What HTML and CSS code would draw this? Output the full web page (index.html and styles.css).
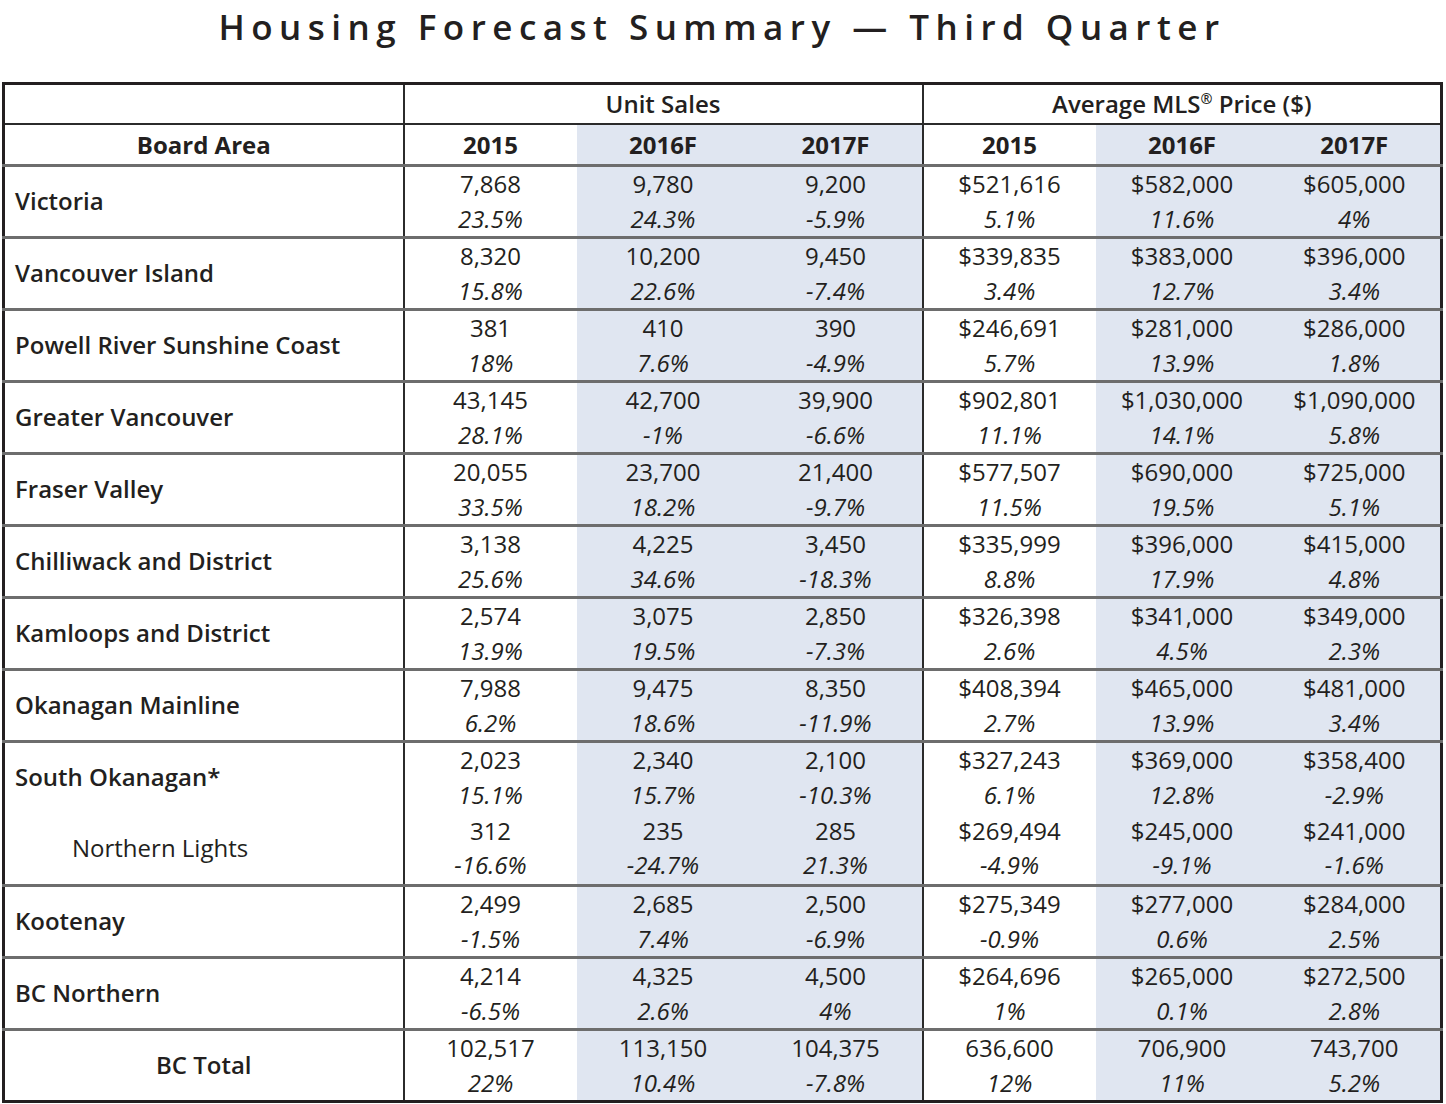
FILE: index.html
```html
<!DOCTYPE html>
<html lang="en">
<head>
<meta charset="utf-8">
<title>Housing Forecast Summary — Third Quarter</title>
<link rel="stylesheet" href="styles.css">
</head>
<body>
<div class="page">
  <h1 class="title">Housing Forecast Summary — Third Quarter</h1>
  <table class="forecast">
    <colgroup>
      <col class="c-area">
      <col class="c-val"><col class="c-val"><col class="c-val">
      <col class="c-val"><col class="c-val"><col class="c-val">
    </colgroup>
    <thead>
      <tr class="group-row">
        <th class="area"></th>
        <th colspan="3" class="sep">Unit Sales</th>
        <th colspan="3" class="sep">Average MLS<sup>®</sup> Price ($)</th>
      </tr>
      <tr class="year-row">
        <th class="area">Board Area</th>
        <th class="sep">2015</th>
        <th class="shade">2016F</th>
        <th class="shade">2017F</th>
        <th class="sep">2015</th>
        <th class="shade">2016F</th>
        <th class="shade">2017F</th>
      </tr>
    </thead>
    <tbody>
      <tr>
        <td class="label">Victoria</td>
        <td class="sep"><span class="num">7,868</span><span class="pct">23.5%</span></td>
        <td class="shade"><span class="num">9,780</span><span class="pct">24.3%</span></td>
        <td class="shade"><span class="num">9,200</span><span class="pct">-5.9%</span></td>
        <td class="sep"><span class="num">$521,616</span><span class="pct">5.1%</span></td>
        <td class="shade"><span class="num">$582,000</span><span class="pct">11.6%</span></td>
        <td class="shade"><span class="num">$605,000</span><span class="pct">4%</span></td>
      </tr>
      <tr>
        <td class="label">Vancouver Island</td>
        <td class="sep"><span class="num">8,320</span><span class="pct">15.8%</span></td>
        <td class="shade"><span class="num">10,200</span><span class="pct">22.6%</span></td>
        <td class="shade"><span class="num">9,450</span><span class="pct">-7.4%</span></td>
        <td class="sep"><span class="num">$339,835</span><span class="pct">3.4%</span></td>
        <td class="shade"><span class="num">$383,000</span><span class="pct">12.7%</span></td>
        <td class="shade"><span class="num">$396,000</span><span class="pct">3.4%</span></td>
      </tr>
      <tr>
        <td class="label">Powell River Sunshine Coast</td>
        <td class="sep"><span class="num">381</span><span class="pct">18%</span></td>
        <td class="shade"><span class="num">410</span><span class="pct">7.6%</span></td>
        <td class="shade"><span class="num">390</span><span class="pct">-4.9%</span></td>
        <td class="sep"><span class="num">$246,691</span><span class="pct">5.7%</span></td>
        <td class="shade"><span class="num">$281,000</span><span class="pct">13.9%</span></td>
        <td class="shade"><span class="num">$286,000</span><span class="pct">1.8%</span></td>
      </tr>
      <tr>
        <td class="label">Greater Vancouver</td>
        <td class="sep"><span class="num">43,145</span><span class="pct">28.1%</span></td>
        <td class="shade"><span class="num">42,700</span><span class="pct">-1%</span></td>
        <td class="shade"><span class="num">39,900</span><span class="pct">-6.6%</span></td>
        <td class="sep"><span class="num">$902,801</span><span class="pct">11.1%</span></td>
        <td class="shade"><span class="num">$1,030,000</span><span class="pct">14.1%</span></td>
        <td class="shade"><span class="num">$1,090,000</span><span class="pct">5.8%</span></td>
      </tr>
      <tr>
        <td class="label">Fraser Valley</td>
        <td class="sep"><span class="num">20,055</span><span class="pct">33.5%</span></td>
        <td class="shade"><span class="num">23,700</span><span class="pct">18.2%</span></td>
        <td class="shade"><span class="num">21,400</span><span class="pct">-9.7%</span></td>
        <td class="sep"><span class="num">$577,507</span><span class="pct">11.5%</span></td>
        <td class="shade"><span class="num">$690,000</span><span class="pct">19.5%</span></td>
        <td class="shade"><span class="num">$725,000</span><span class="pct">5.1%</span></td>
      </tr>
      <tr>
        <td class="label">Chilliwack and District</td>
        <td class="sep"><span class="num">3,138</span><span class="pct">25.6%</span></td>
        <td class="shade"><span class="num">4,225</span><span class="pct">34.6%</span></td>
        <td class="shade"><span class="num">3,450</span><span class="pct">-18.3%</span></td>
        <td class="sep"><span class="num">$335,999</span><span class="pct">8.8%</span></td>
        <td class="shade"><span class="num">$396,000</span><span class="pct">17.9%</span></td>
        <td class="shade"><span class="num">$415,000</span><span class="pct">4.8%</span></td>
      </tr>
      <tr>
        <td class="label">Kamloops and District</td>
        <td class="sep"><span class="num">2,574</span><span class="pct">13.9%</span></td>
        <td class="shade"><span class="num">3,075</span><span class="pct">19.5%</span></td>
        <td class="shade"><span class="num">2,850</span><span class="pct">-7.3%</span></td>
        <td class="sep"><span class="num">$326,398</span><span class="pct">2.6%</span></td>
        <td class="shade"><span class="num">$341,000</span><span class="pct">4.5%</span></td>
        <td class="shade"><span class="num">$349,000</span><span class="pct">2.3%</span></td>
      </tr>
      <tr>
        <td class="label">Okanagan Mainline</td>
        <td class="sep"><span class="num">7,988</span><span class="pct">6.2%</span></td>
        <td class="shade"><span class="num">9,475</span><span class="pct">18.6%</span></td>
        <td class="shade"><span class="num">8,350</span><span class="pct">-11.9%</span></td>
        <td class="sep"><span class="num">$408,394</span><span class="pct">2.7%</span></td>
        <td class="shade"><span class="num">$465,000</span><span class="pct">13.9%</span></td>
        <td class="shade"><span class="num">$481,000</span><span class="pct">3.4%</span></td>
      </tr>
      <tr>
        <td class="label">South Okanagan*</td>
        <td class="sep"><span class="num">2,023</span><span class="pct">15.1%</span></td>
        <td class="shade"><span class="num">2,340</span><span class="pct">15.7%</span></td>
        <td class="shade"><span class="num">2,100</span><span class="pct">-10.3%</span></td>
        <td class="sep"><span class="num">$327,243</span><span class="pct">6.1%</span></td>
        <td class="shade"><span class="num">$369,000</span><span class="pct">12.8%</span></td>
        <td class="shade"><span class="num">$358,400</span><span class="pct">-2.9%</span></td>
      </tr>
      <tr class="sub">
        <td class="label sublabel">Northern Lights</td>
        <td class="sep"><span class="num">312</span><span class="pct">-16.6%</span></td>
        <td class="shade"><span class="num">235</span><span class="pct">-24.7%</span></td>
        <td class="shade"><span class="num">285</span><span class="pct">21.3%</span></td>
        <td class="sep"><span class="num">$269,494</span><span class="pct">-4.9%</span></td>
        <td class="shade"><span class="num">$245,000</span><span class="pct">-9.1%</span></td>
        <td class="shade"><span class="num">$241,000</span><span class="pct">-1.6%</span></td>
      </tr>
      <tr>
        <td class="label">Kootenay</td>
        <td class="sep"><span class="num">2,499</span><span class="pct">-1.5%</span></td>
        <td class="shade"><span class="num">2,685</span><span class="pct">7.4%</span></td>
        <td class="shade"><span class="num">2,500</span><span class="pct">-6.9%</span></td>
        <td class="sep"><span class="num">$275,349</span><span class="pct">-0.9%</span></td>
        <td class="shade"><span class="num">$277,000</span><span class="pct">0.6%</span></td>
        <td class="shade"><span class="num">$284,000</span><span class="pct">2.5%</span></td>
      </tr>
      <tr>
        <td class="label">BC Northern</td>
        <td class="sep"><span class="num">4,214</span><span class="pct">-6.5%</span></td>
        <td class="shade"><span class="num">4,325</span><span class="pct">2.6%</span></td>
        <td class="shade"><span class="num">4,500</span><span class="pct">4%</span></td>
        <td class="sep"><span class="num">$264,696</span><span class="pct">1%</span></td>
        <td class="shade"><span class="num">$265,000</span><span class="pct">0.1%</span></td>
        <td class="shade"><span class="num">$272,500</span><span class="pct">2.8%</span></td>
      </tr>
      <tr class="total">
        <td class="label total-label">BC Total</td>
        <td class="sep"><span class="num">102,517</span><span class="pct">22%</span></td>
        <td class="shade"><span class="num">113,150</span><span class="pct">10.4%</span></td>
        <td class="shade"><span class="num">104,375</span><span class="pct">-7.8%</span></td>
        <td class="sep"><span class="num">636,600</span><span class="pct">12%</span></td>
        <td class="shade"><span class="num">706,900</span><span class="pct">11%</span></td>
        <td class="shade"><span class="num">743,700</span><span class="pct">5.2%</span></td>
      </tr>
    </tbody>
  </table>
</div>
</body>
</html>
```

FILE: styles.css
```css
html, body {
  margin: 0;
  padding: 0;
  background: #ffffff;
}

.page {
  padding: 0 4px 0 2px;
  color: #231f20;
  font-family: "Open Sans", "Noto Sans", "Liberation Sans", sans-serif;
}

.title {
  margin: 0;
  height: 82px;
  padding-top: 6px;
  box-sizing: border-box;
  text-align: center;
  font-size: 35px;
  font-weight: 600;
  letter-spacing: 0.185em;
  line-height: 42px;
}

.forecast {
  width: 1440px;
  border-collapse: collapse;
  table-layout: fixed;
  border: 3px solid #231f20;
  font-size: 24px;
}

.c-area { width: 400px; }
.c-val { width: 173px; }

.forecast th,
.forecast td {
  padding: 0;
  text-align: center;
  vertical-align: middle;
}

.group-row th {
  height: 38px;
  font-weight: 600;
  line-height: 30px;
  border-bottom: 2px solid #2b2b2b;
}

.group-row th sup {
  font-size: 0.6em;
  line-height: 0;
  vertical-align: 0.6em;
}

.year-row th {
  height: 39px;
  line-height: 30px;
  font-weight: 700;
  border-bottom: 3px solid #6d6d6d;
}

.sep {
  border-left: 2px solid #2b2b2b;
}

.shade {
  background: #e0e6f1;
}

.forecast tbody tr td {
  height: 69px;
  border-top: 3px solid #6d6d6d;
  line-height: 34.5px;
}

.forecast tbody tr.sub td {
  border-top: none;
  height: 72px;
}

.num,
.pct {
  display: block;
}

.pct {
  font-style: italic;
}

.label {
  text-align: left !important;
  padding-left: 10px !important;
  font-weight: 600;
}

.label.sublabel {
  font-weight: 400;
  padding-left: 67px !important;
}

.label.total-label {
  text-align: center !important;
  padding-left: 0 !important;
}
```
